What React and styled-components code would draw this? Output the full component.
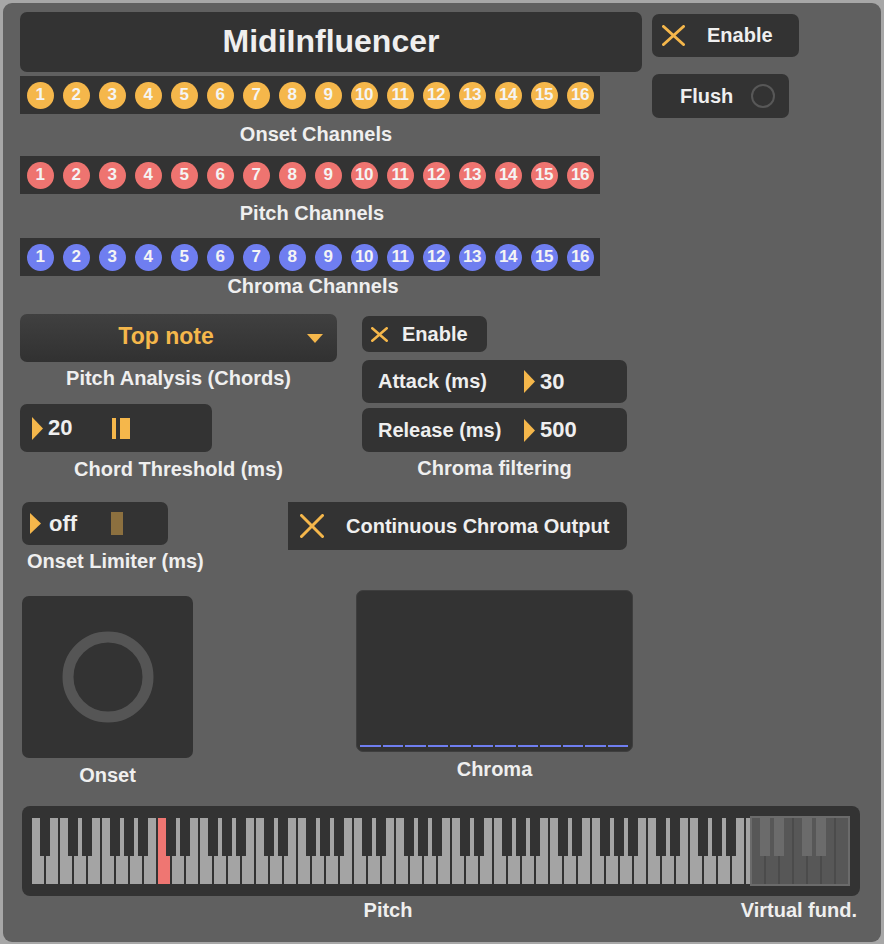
import React from 'react';
import styled, { createGlobalStyle } from 'styled-components';

const ORANGE = '#f5b74b';

const GlobalStyle = createGlobalStyle`
  html, body {
    margin: 0;
    padding: 0;
    background: #a7a7a7;
  }
  body {
    font-family: "Liberation Sans", Arial, sans-serif;
  }
`;

const Panel = styled.div`
  box-sizing: border-box;
  width: 878px;
  height: 939px;
  margin: 3px;
  padding: 9px 0 0 17px;
  background: #606060;
  border-radius: 9px;
  display: flex;
  flex-direction: column;
  color: #efefef;
  font-weight: bold;
`;

const TopRow = styled.div`
  display: flex;
  gap: 10px;
`;

const LeftCol = styled.div`
  width: 622px;
  display: flex;
  flex-direction: column;
`;

const Title = styled.div`
  height: 60px;
  background: #333;
  border-radius: 7px;
  font-size: 32px;
  line-height: 58px;
  text-align: center;
`;

const ChannelBar = styled.div`
  width: 580px;
  height: 38px;
  margin-top: ${p => p.$mt}px;
  background: #333;
  display: flex;
  align-items: center;
  justify-content: center;
  gap: 9px;
`;

const Dot = styled.div`
  width: 27px;
  height: 27px;
  border-radius: 50%;
  background: ${p => p.$color};
  display: flex;
  align-items: center;
  justify-content: center;
  font-size: 17px;
  color: #f4f4f4;
  letter-spacing: -0.5px;
`;

const Caption = styled.div`
  font-size: 20px;
  line-height: 20px;
  white-space: nowrap;
  text-align: ${p => p.$align || 'center'};
  margin-top: ${p => p.$mt || 0}px;
  margin-left: ${p => (p.$push ? 'auto' : '0')};
  padding-left: ${p => p.$pl || 0}px;
  padding-right: ${p => p.$pr || 0}px;
  width: ${p => (p.$w ? p.$w + 'px' : 'auto')};
  flex: none;
`;

const RightCol = styled.div`
  display: flex;
  flex-direction: column;
  align-items: flex-start;
`;

const Toggle = styled.div`
  box-sizing: border-box;
  display: flex;
  align-items: center;
  background: #333;
  border-radius: ${p => p.$radius || '7px'};
  width: ${p => p.$w}px;
  height: ${p => p.$h}px;
  margin-top: ${p => p.$mt || 0}px;
  padding-left: ${p => p.$pl}px;
  font-size: 20px;
  flex: none;
`;

const ToggleText = styled.span`
  margin-left: ${p => p.$gap}px;
`;

const Ring = styled.span`
  box-sizing: border-box;
  width: 24px;
  height: 24px;
  border-radius: 50%;
  border: 2.5px solid #585858;
  margin-left: 18px;
`;

const MidRow = styled.div`
  display: flex;
  gap: 25px;
  margin-top: 18px;
`;

const Column = styled.div`
  display: flex;
  flex-direction: column;
  align-items: flex-start;
  width: ${p => p.$w}px;
  margin-top: ${p => p.$mt || 0}px;
  margin-left: ${p => p.$ml || 0}px;
`;

const Dropdown = styled.div`
  box-sizing: border-box;
  width: 317px;
  height: 48px;
  border-radius: 7px;
  background: linear-gradient(#404040, #313131);
  display: flex;
  align-items: center;
  padding: 0 14px 0 5px;
`;

const DropdownText = styled.span`
  flex: 1;
  text-align: center;
  color: ${ORANGE};
  font-size: 23px;
  margin-top: -3px;
`;

const NumBox = styled.div`
  box-sizing: border-box;
  display: flex;
  align-items: center;
  background: #333;
  border-radius: 7px;
  width: ${p => p.$w}px;
  height: ${p => p.$h}px;
  margin-top: ${p => p.$mt || 0}px;
  padding-left: ${p => p.$pl}px;
`;

const NumValue = styled.span`
  font-size: 22px;
  width: ${p => (p.$w ? p.$w + 'px' : 'auto')};
  margin-left: ${p => p.$gap}px;
`;

const ParamLabel = styled.span`
  font-size: 20px;
  width: 146px;
`;

const Thumb = styled.span`
  display: block;
  width: ${p => p.$w}px;
  height: ${p => p.$h}px;
  margin-left: ${p => p.$ml || 0}px;
  background: ${p => p.$color};
`;

const Row = styled.div`
  display: flex;
  align-items: flex-start;
  padding-left: 2px;
  margin-top: ${p => p.$mt}px;
`;

const Screen = styled.div`
  box-sizing: border-box;
  width: ${p => p.$w}px;
  height: 162px;
  background: #333;
  border-radius: 7px;
  border: ${p => (p.$border ? '1px solid #3e3e3e' : 'none')};
  display: flex;
  align-items: ${p => (p.$bars ? 'stretch' : 'center')};
  justify-content: ${p => (p.$bars ? 'flex-end' : 'center')};
  flex-direction: ${p => (p.$bars ? 'column' : 'row')};
  padding: ${p => (p.$bars ? '0 4px 4px 3px' : '0')};
`;

const Dashes = styled.div`
  display: flex;
  gap: 2px;
`;

const Dash = styled.span`
  flex: 1;
  height: 2px;
  background: #6f7ef0;
`;

const Piano = styled.div`
  box-sizing: border-box;
  position: relative;
  width: 838px;
  height: 90px;
  margin-left: 2px;
  margin-top: 21px;
  padding: 12px 0 0 10px;
  background: #333;
  border-radius: 8px;
`;

const Keys = styled.div`
  position: relative;
  display: flex;
  gap: 2px;
  height: 66px;
`;

const WhiteKey = styled.span`
  width: 12px;
  height: 66px;
  flex: none;
  background: ${p => p.$color};
`;

const BlackKey = styled.span`
  position: absolute;
  top: 0;
  width: 10px;
  height: 38px;
  background: ${p => p.$color};
`;

const FundOverlay = styled.div`
  position: absolute;
  left: 728px;
  top: 10px;
  width: 96px;
  height: 66px;
  border: 2px solid #6b6b6b;
  background: #4b4b4b;
`;

const CaptionRow = styled.div`
  display: flex;
  margin-top: 4px;
  padding-left: 2px;
`;

const XIcon = ({ w, h, sw = 3 }) => (
  <svg width={w} height={h} viewBox={`0 0 ${w} ${h}`}>
    <line x1={sw / 2} y1={sw / 2} x2={w - sw / 2} y2={h - sw / 2} stroke={ORANGE} strokeWidth={sw} strokeLinecap="round" />
    <line x1={w - sw / 2} y1={sw / 2} x2={sw / 2} y2={h - sw / 2} stroke={ORANGE} strokeWidth={sw} strokeLinecap="round" />
  </svg>
);

const Arrow = ({ h = 23 }) => (
  <svg width="11" height={h} viewBox={`0 0 11 ${h}`}>
    <polygon points={`0,0 11,${h / 2} 0,${h}`} fill={ORANGE} />
  </svg>
);

const channels = Array.from({ length: 16 }, (_, i) => i + 1);
const noteNames = ['A', 'B', 'C', 'D', 'E', 'F', 'G'];
const whites = Array.from({ length: 52 }, (_, i) => i);
const blacks = whites.filter(i => i < 51 && ['A', 'C', 'D', 'F', 'G'].includes(noteNames[i % 7]));

const ChannelRow = ({ color, mt }) => (
  <ChannelBar $mt={mt}>
    {channels.map(n => (
      <Dot key={n} $color={color}>{n}</Dot>
    ))}
  </ChannelBar>
);

export default function App() {
  return (
    <>
      <GlobalStyle />
      <Panel>
        <TopRow>
          <LeftCol>
            <Title>MidiInfluencer</Title>
            <ChannelRow color={ORANGE} mt={4} />
            <Caption $mt={10} $w={580} $pl={6}>Onset Channels</Caption>
            <ChannelRow color="#ee7470" mt={12} />
            <Caption $mt={9} $w={580} $pl={2}>Pitch Channels</Caption>
            <ChannelRow color="#6f7ef0" mt={15} />
            <Caption $w={580} $pl={3}>Chroma Channels</Caption>
          </LeftCol>
          <RightCol>
            <Toggle $w={147} $h={43} $mt={2} $pl={10}>
              <XIcon w={23} h={21} sw={3} />
              <ToggleText $gap={22}>Enable</ToggleText>
            </Toggle>
            <Toggle $w={137} $h={44} $mt={17} $pl={28}>
              <span>Flush</span>
              <Ring />
            </Toggle>
          </RightCol>
        </TopRow>

        <MidRow>
          <Column $w={317}>
            <Dropdown>
              <DropdownText>Top note</DropdownText>
              <svg width="16" height="9" viewBox="0 0 16 9">
                <polygon points="0,0 16,0 8,9" fill={ORANGE} />
              </svg>
            </Dropdown>
            <Caption $mt={6} $w={317}>Pitch Analysis (Chords)</Caption>
            <NumBox $w={192} $h={48} $mt={16} $pl={12}>
              <Arrow />
              <NumValue $w={64} $gap={5}>20</NumValue>
              <Thumb $w={4} $h={21} $color={ORANGE} />
              <Thumb $w={10} $h={21} $ml={4} $color={ORANGE} />
            </NumBox>
            <Caption $mt={7} $w={317}>Chord Threshold (ms)</Caption>
          </Column>
          <Column $w={265}>
            <Toggle $w={125} $h={36} $mt={2} $pl={9}>
              <XIcon w={17} h={15} sw={2.5} />
              <ToggleText $gap={14}>Enable</ToggleText>
            </Toggle>
            <NumBox $w={265} $h={43} $mt={8} $pl={16}>
              <ParamLabel>Attack (ms)</ParamLabel>
              <Arrow />
              <NumValue $gap={5}>30</NumValue>
            </NumBox>
            <NumBox $w={265} $h={44} $mt={5} $pl={16}>
              <ParamLabel>Release (ms)</ParamLabel>
              <Arrow />
              <NumValue $gap={5}>500</NumValue>
            </NumBox>
            <Caption $mt={6} $w={265}>Chroma filtering</Caption>
          </Column>
        </MidRow>

        <Row $mt={23}>
          <Column $w={266}>
            <NumBox $w={146} $h={43} $pl={8}>
              <Arrow h={21} />
              <NumValue $w={62} $gap={8}>off</NumValue>
              <Thumb $w={12} $h={23} $color="#8c703f" />
            </NumBox>
            <Caption $mt={6} $pl={5} $align="left">Onset Limiter (ms)</Caption>
          </Column>
          <Toggle $w={339} $h={48} $pl={12} $radius="0 7px 7px 0">
            <XIcon w={24} h={24} sw={3} />
            <ToggleText $gap={22}>Continuous Chroma Output</ToggleText>
          </Toggle>
        </Row>

        <Row $mt={19}>
          <Column $w={171} $mt={6}>
            <Screen $w={171}>
              <svg width="100" height="100" viewBox="0 0 100 100">
                <circle cx="50" cy="50" r="40" fill="none" stroke="#555" strokeWidth="11" />
              </svg>
            </Screen>
            <Caption $mt={7} $w={171}>Onset</Caption>
          </Column>
          <Column $w={277} $ml={163}>
            <Screen $w={277} $border $bars>
              <Dashes>
                {Array.from({ length: 12 }, (_, i) => (
                  <Dash key={i} />
                ))}
              </Dashes>
            </Screen>
            <Caption $mt={7} $w={277}>Chroma</Caption>
          </Column>
        </Row>

        <Piano>
          <Keys>
            {whites.map(i => (
              <WhiteKey key={i} $color={i === 9 ? '#ef7672' : '#a4a4a4'} />
            ))}
            {blacks.map(i => (
              <BlackKey key={'b' + i} $color="#333" style={{ left: i * 14 + 8 }} />
            ))}
          </Keys>
          <FundOverlay>
            <Keys>
              {Array.from({ length: 7 }, (_, i) => (
                <WhiteKey key={i} $color="#575757" />
              ))}
              {[8, 22, 50, 64].map(x => (
                <BlackKey key={x} $color="#6b6b6b" style={{ left: x }} />
              ))}
            </Keys>
          </FundOverlay>
        </Piano>
        <CaptionRow>
          <Caption $w={600} $pl={66}>Pitch</Caption>
          <Caption $push $align="right" $pr={24}>Virtual fund.</Caption>
        </CaptionRow>
      </Panel>
    </>
  );
}
